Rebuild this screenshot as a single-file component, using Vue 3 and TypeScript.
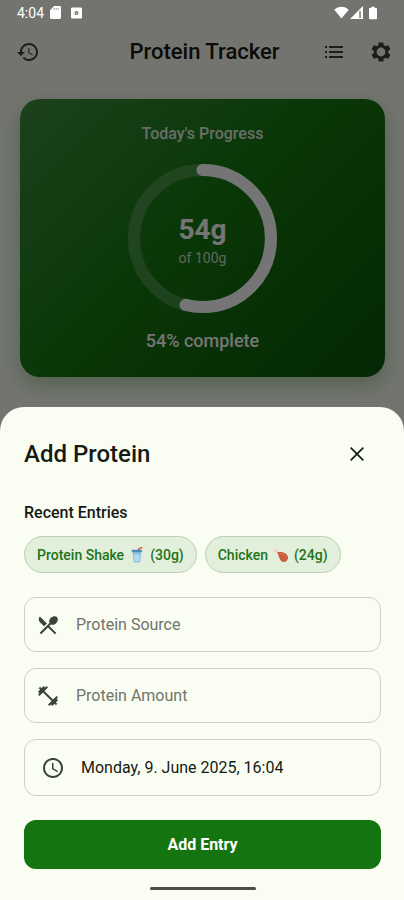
<script setup lang="ts">
import { computed, ref } from 'vue'

interface Entry {
  name: string
  grams: number
  icon: 'shake' | 'chicken'
}

const goal = 100
const recent: Entry[] = [
  { name: 'Protein Shake', grams: 30, icon: 'shake' },
  { name: 'Chicken', grams: 24, icon: 'chicken' },
]

const source = ref('')
const amount = ref('')
const date = ref('Monday, 9. June 2025, 16:04')

const total = computed(() => recent.reduce((sum, e) => sum + e.grams, 0))
const percent = computed(() => Math.round((total.value / goal) * 100))

function pick(entry: Entry) {
  source.value = entry.name
  amount.value = String(entry.grams)
}
</script>

<template>
  <div class="app">
    <div class="screen">
      <header class="bar">
        <div class="side">
          <button class="icon-btn" type="button" aria-label="History">
            <svg viewBox="0 0 24 24"><path d="M13 3c-4.97 0-9 4.03-9 9H1l3.89 3.89.07.14L9 12H6c0-3.87 3.13-7 7-7s7 3.13 7 7-3.13 7-7 7c-1.93 0-3.68-.79-4.94-2.06l-1.42 1.42C8.27 19.99 10.51 21 13 21c4.97 0 9-4.03 9-9s-4.03-9-9-9z" /><path d="M12 8v5l4.28 2.54.72-1.21-3.5-2.08V8z" opacity=".7" /></svg>
          </button>
        </div>
        <h1>Protein Tracker</h1>
        <div class="side end">
          <button class="icon-btn" type="button" aria-label="Entries">
            <svg viewBox="0 0 24 24"><path d="M3 6h2v2H3zm0 5h2v2H3zm0 5h2v2H3zM7 6h14v2H7zm0 5h14v2H7zm0 5h14v2H7z" /></svg>
          </button>
          <button class="icon-btn" type="button" aria-label="Settings">
            <svg viewBox="0 0 24 24"><path fill-rule="evenodd" d="M19.14 12.94c.04-.3.06-.61.06-.94 0-.32-.02-.64-.07-.94l2.03-1.58c.18-.14.23-.41.12-.61l-1.92-3.32c-.12-.22-.37-.29-.59-.22l-2.39.96c-.5-.38-1.03-.7-1.62-.94l-.36-2.54c-.04-.24-.24-.41-.48-.41h-3.84c-.24 0-.43.17-.47.41l-.36 2.54c-.59.24-1.13.57-1.62.94l-2.39-.96c-.22-.08-.47 0-.59.22L2.74 8.87c-.12.21-.08.47.12.61l2.03 1.58c-.05.3-.09.63-.09.94s.02.64.07.94l-2.03 1.58c-.18.14-.23.41-.12.61l1.92 3.32c.12.22.37.29.59.22l2.39-.96c.5.38 1.03.7 1.62.94l.36 2.54c.05.24.24.41.48.41h3.84c.24 0 .44-.17.47-.41l.36-2.54c.59-.24 1.13-.56 1.62-.94l2.39.96c.22.08.47 0 .59-.22l1.92-3.32c.12-.22.07-.47-.12-.61l-2.01-1.58zM12 16.4a4.4 4.4 0 1 1 0-8.8 4.4 4.4 0 0 1 0 8.8z" /></svg>
          </button>
        </div>
      </header>

      <section class="card">
        <h2>Today's Progress</h2>
        <div class="ring">
          <svg viewBox="0 0 148 148" aria-hidden="true">
            <circle class="track" cx="74" cy="74" r="68" />
            <circle class="value" cx="74" cy="74" r="68" pathLength="100" :stroke-dasharray="`${percent} 100`" transform="rotate(-90 74 74)" />
          </svg>
          <div class="numbers">
            <strong>{{ total }}g</strong>
            <span>of {{ goal }}g</span>
          </div>
        </div>
        <p>{{ percent }}% complete</p>
      </section>
    </div>

    <div class="overlay">
      <div class="status">
        <span>4:04</span>
        <svg class="sd" viewBox="0 0 12 14"><path d="M4.5 0H10.500a1.500 1.500 0 0 1 1.500 1.500v11a1.500 1.500 0 0 1-1.500 1.500h-9A1.500 1.500 0 0 1 0 12.500V4.500z" fill="#fff" /><path d="M4.500 2v2M6.800 2v2M9 2v2" stroke="#8b8b87" /></svg>
        <svg class="app-mark" viewBox="0 0 12 12"><rect width="12" height="12" rx="1.500" fill="#fff" /><path d="M4 8V5l2-1.500L8 5v3z" fill="#73746e" /><circle cx="6" cy="6.200" r=".8" fill="#ddd" /></svg>
        <div class="signals">
          <svg class="wifi" viewBox="0 0 16 13"><path d="M8 12.800L.3 3.600C2.400 1.500 5 .4 8 .4s5.600 1.100 7.700 3.200z" fill="#fff" /></svg>
          <svg class="cell" viewBox="0 0 13 13"><path d="M13 0v13H0z" fill="#fff" /><path d="M10 5v7" stroke="#73746e" stroke-width="1.500" /></svg>
          <svg class="battery" viewBox="0 0 9 14"><path d="M2.500 0h4v1.500H8a1 1 0 0 1 1 1V13a1 1 0 0 1-1 1H1a1 1 0 0 1-1-1V2.500a1 1 0 0 1 1-1h1.500z" fill="#fff" /></svg>
        </div>
      </div>

      <form class="sheet" @submit.prevent>
        <div class="sheet-head">
          <h2>Add Protein</h2>
          <button class="close" type="button" aria-label="Close">
            <svg viewBox="0 0 24 24"><path d="M5.700 5.700l12.600 12.600M18.300 5.700L5.700 18.300" fill="none" stroke="currentColor" stroke-width="1.700" /></svg>
          </button>
        </div>

        <h3>Recent Entries</h3>
        <div class="chips">
          <button v-for="e in recent" :key="e.name" class="chip" type="button" @click="pick(e)">
            <span>{{ e.name }}</span>
            <svg v-if="e.icon === 'shake'" viewBox="0 0 16 16" aria-hidden="true">
              <path d="M8.500 4L10 1.600 13.500.5" fill="none" stroke="#dd5a50" stroke-width="1.500" />
              <path d="M3.400 4h9l-1.100 10.500q-.2 1-1.200 1H5.700q-1 0-1.200-1z" fill="#8fc4e2" />
              <path d="M5 8h5.800l-.5 6H5.500z" fill="#b4dcf0" />
              <rect x="2.800" y="2.800" width="10.200" height="2.400" rx=".8" fill="#4c8db5" />
            </svg>
            <svg v-else viewBox="0 0 16 16" aria-hidden="true">
              <path d="M1.600 2.800L6 7" stroke="#f1c9a5" stroke-width="1.700" stroke-linecap="round" />
              <circle cx="1.400" cy="3.300" r="1.100" fill="#f6d9bd" /><circle cx="2.500" cy="2.100" r="1.100" fill="#f6d9bd" />
              <path d="M4.300 5.300C8 4.200 14.600 5.700 15 10.300c.2 3-2.200 4.900-4.700 4.600C6.400 14.400 6.600 10 4.300 5.300z" fill="#cb5b3e" />
              <path d="M8 7c2.500 0 4.500 1 5 3" stroke="#df8062" fill="none" stroke-linecap="round" />
            </svg>
            <span>({{ e.grams }}g)</span>
          </button>
        </div>

        <div class="fields">
          <label class="field">
            <svg viewBox="0 0 24 24" aria-hidden="true"><path d="M8.100 13.340l2.830-2.830L3.910 3.500c-1.560 1.560-1.560 4.090 0 5.660l4.190 4.180zm6.780-1.810c1.530.71 3.680.21 5.270-1.380 1.910-1.910 2.280-4.650.81-6.120-1.460-1.460-4.200-1.100-6.120.81-1.590 1.590-2.090 3.740-1.380 5.270L3.700 19.870l1.410 1.410L12 14.410l6.880 6.880 1.410-1.410L13.410 13l1.470-1.470z" /></svg>
            <input v-model="source" type="text" placeholder="Protein Source" aria-label="Protein Source" />
          </label>
          <label class="field">
            <svg viewBox="0 0 24 24" aria-hidden="true"><path d="M20.570 14.860L22 13.430 20.570 12 17 15.570 8.430 7 12 3.430 10.570 2 9.140 3.430 7.710 2 5.570 4.140 4.140 2.710 2.710 4.140l1.430 1.430L2 7.710l1.430 1.430L2 10.570 3.430 12 7 8.430 15.570 17 12 20.570 13.430 22l1.430-1.430L16.290 22l2.140-2.140 1.430 1.430 1.430-1.430-1.430-1.430L22 16.290z" /></svg>
            <input v-model="amount" type="text" inputmode="numeric" placeholder="Protein Amount" aria-label="Protein Amount" />
          </label>
          <button class="field date" type="button">
            <svg viewBox="0 0 24 24" aria-hidden="true"><path d="M11.990 2C6.470 2 2 6.480 2 12s4.470 10 9.990 10C17.520 22 22 17.520 22 12S17.520 2 11.990 2zM12 20c-4.420 0-8-3.580-8-8s3.580-8 8-8 8 3.580 8 8-3.580 8-8 8zm.5-13H11v6l5.250 3.150.75-1.230-4.500-2.670z" /></svg>
            <span>{{ date }}</span>
          </button>
        </div>

        <button class="submit" type="submit">Add Entry</button>
        <div class="home"></div>
      </form>
    </div>
  </div>
</template>

<style>
body {
  background: #fafdf2;
}
</style>

<style scoped>
.app {
  display: grid;
  min-height: 100vh;
  font-family: Roboto, "Liberation Sans", sans-serif;
  color: #161a14;
}
.app * {
  box-sizing: border-box;
}
h1, h2, h3, p {
  margin: 0;
}
button, input {
  font: inherit;
  color: inherit;
  margin: 0;
  padding: 0;
  border: 0;
  background: none;
}
svg {
  display: block;
  flex: none;
}
.screen, .overlay {
  grid-area: 1 / 1;
  min-width: 0;
}

.screen {
  padding-top: 24px;
  background: #fafdf2;
}
.bar {
  display: grid;
  grid-template-columns: 1fr auto 1fr;
  align-items: center;
  height: 55px;
  padding: 0 11px 0 16px;
}
.bar h1 {
  font-size: 22px;
  line-height: 28px;
  font-weight: 500;
}
.side {
  display: flex;
  gap: 23px;
}
.end {
  justify-content: flex-end;
}
.icon-btn svg {
  width: 24px;
  height: 24px;
  fill: #3c4139;
}

.card {
  display: flex;
  flex-direction: column;
  align-items: center;
  margin: 20px 19px 0 20px;
  padding: 24px;
  border-radius: 20px;
  color: #fff;
  background: linear-gradient(135deg, #3f8f40 0%, #167a12 45%, #126c0e 65%, #0a570b 100%);
  box-shadow: 0 8px 20px rgba(20, 116, 15, 0.3);
}
.card h2 {
  font-size: 16px;
  line-height: 22px;
  font-weight: 500;
  color: rgba(255, 255, 255, 0.9);
}
.ring {
  display: grid;
  place-items: center;
  margin: 19px 0 16px;
}
.ring > * {
  grid-area: 1 / 1;
}
.ring svg {
  width: 149px;
  height: 149px;
}
.ring circle {
  fill: none;
  stroke-width: 12;
}
.track {
  stroke: rgba(255, 255, 255, 0.2);
}
.value {
  stroke: #fff;
  stroke-linecap: round;
}
.numbers {
  display: flex;
  flex-direction: column;
  align-items: center;
  padding-top: 2px;
}
.numbers strong {
  font-size: 28px;
  line-height: 36px;
  font-weight: 700;
}
.numbers span {
  font-size: 14px;
  line-height: 20px;
  color: rgba(255, 255, 255, 0.8);
}
.card p {
  font-size: 18px;
  line-height: 24px;
  font-weight: 500;
}

.overlay {
  position: relative;
  display: flex;
  flex-direction: column;
  justify-content: space-between;
  background: rgba(0, 0, 0, 0.54);
}
.status {
  display: flex;
  align-items: center;
  height: 25px;
  padding: 0 27px 0 17px;
  color: #fff;
  font-size: 14px;
  line-height: 16px;
}
.sd {
  width: 11px;
  height: 13px;
  margin-left: 6px;
}
.app-mark {
  width: 11px;
  height: 12px;
  margin-left: 10px;
}
.signals {
  display: flex;
  align-items: center;
  margin-left: auto;
}
.wifi {
  width: 15px;
  height: 13px;
}
.cell {
  width: 13px;
  height: 13px;
  margin-left: 1px;
}
.battery {
  width: 8px;
  height: 14px;
  margin-left: 6px;
}

.sheet {
  display: flex;
  flex-direction: column;
  padding: 23px 23px 10px 24px;
  border-radius: 24px 24px 0 0;
  background: #fafdf2;
}
.sheet-head {
  display: flex;
  align-items: center;
  justify-content: space-between;
}
.sheet-head h2 {
  font-size: 24px;
  line-height: 32px;
  font-weight: 500;
}
.close {
  display: grid;
  place-items: center;
  width: 48px;
  height: 48px;
}
.close svg {
  width: 24px;
  height: 24px;
}
h3 {
  margin-top: 24px;
  font-size: 16px;
  line-height: 22px;
  font-weight: 500;
}
.chips {
  display: flex;
  gap: 8px;
  margin-top: 12px;
}
.chip {
  display: flex;
  align-items: center;
  gap: 5px;
  height: 37px;
  padding: 0 12px;
  border: 1px solid #bccfb8;
  border-radius: 19px;
  background: #e2efda;
  color: #1f7420;
  font-size: 14px;
  line-height: 20px;
  font-weight: 500;
  white-space: nowrap;
}
.chip svg {
  width: 16px;
  height: 16px;
}
.fields {
  display: flex;
  flex-direction: column;
  gap: 16px;
  margin: 24px 0;
}
.field {
  display: flex;
  align-items: center;
  gap: 16px;
  height: 55px;
  padding: 0 11px;
  border: 1px solid #cdd0c6;
  border-radius: 12px;
  font-size: 16px;
  line-height: 24px;
  text-align: left;
}
.field svg {
  width: 24px;
  height: 24px;
  fill: #3c4139;
}
.field input {
  flex: 1;
  min-width: 0;
  height: 24px;
  outline: none;
}
.field input::placeholder {
  color: #70756c;
  opacity: 1;
}
.date {
  height: 57px;
  padding: 0 16px;
}
.submit {
  height: 49px;
  border-radius: 12px;
  background: #14740f;
  color: #fff;
  font-size: 16px;
  line-height: 24px;
  font-weight: 700;
}
.home {
  align-self: center;
  width: 106px;
  height: 3px;
  margin-top: 18px;
  border-radius: 2px;
  background: #4c4d49;
}
</style>
